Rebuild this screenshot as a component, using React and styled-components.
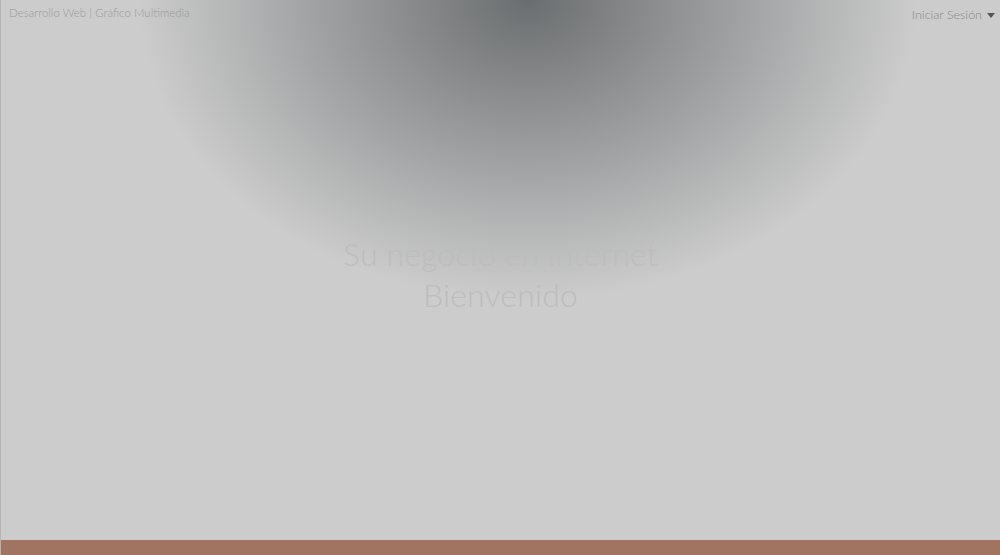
import React from 'react';
import styled, { createGlobalStyle } from 'styled-components';

const GlobalStyle = createGlobalStyle`
  html, body {
    margin: 0;
    padding: 0;
    height: 100%;
  }
  body {
    font-family: Lato, "Open Sans", sans-serif;
    background: #cccccc;
  }
`;

const Page = styled.div`
  display: flex;
  flex-direction: column;
  height: 100vh;
  border-left: 1px solid #b4b4b4;
  box-sizing: border-box;
  background:
    radial-gradient(ellipse 390px 300px at 527px 0, #6b6e70 0%, #cccccc 100%) no-repeat,
    #cccccc;
`;

const Header = styled.header`
  display: flex;
  justify-content: space-between;
  align-items: flex-start;
  padding: 0 5px 0 8px;
  height: 28px;
`;

const Tagline = styled.span`
  font-size: 11.5px;
  font-weight: 300;
  line-height: 12px;
  margin-top: 7px;
  color: #999999;
`;

const Login = styled.button`
  display: flex;
  align-items: center;
  gap: 5px;
  margin-top: 8px;
  padding: 0;
  border: none;
  background: none;
  font-family: Lato, "Open Sans", sans-serif;
  font-size: 12.5px;
  font-weight: 300;
  line-height: 14px;
  color: #888888;
  cursor: pointer;
`;

const Caret = styled.span`
  width: 0;
  height: 0;
  border-left: 4px solid transparent;
  border-right: 4px solid transparent;
  border-top: 5px solid #555555;
  margin-top: 1px;
`;

const Hero = styled.main`
  flex: 1;
  display: flex;
  flex-direction: column;
  align-items: center;
  padding-top: 205px;
`;

const Title = styled.h1`
  margin: 0;
  font-size: 32px;
  font-weight: 300;
  line-height: 41px;
  color: #bdbdbd;
  text-align: center;
  letter-spacing: 0.15px;
`;

const Footer = styled.footer`
  height: 15px;
  background: #a07461;
`;

export default function App() {
  return (
    <>
      <GlobalStyle />
      <Page>
        <Header>
          <Tagline>Desarrollo Web | Gráfico Multimedia</Tagline>
          <Login>
            Iniciar Sesión
            <Caret />
          </Login>
        </Header>
        <Hero>
          <Title>Su negocio en internet</Title>
          <Title>Bienvenido</Title>
        </Hero>
        <Footer />
      </Page>
    </>
  );
}
